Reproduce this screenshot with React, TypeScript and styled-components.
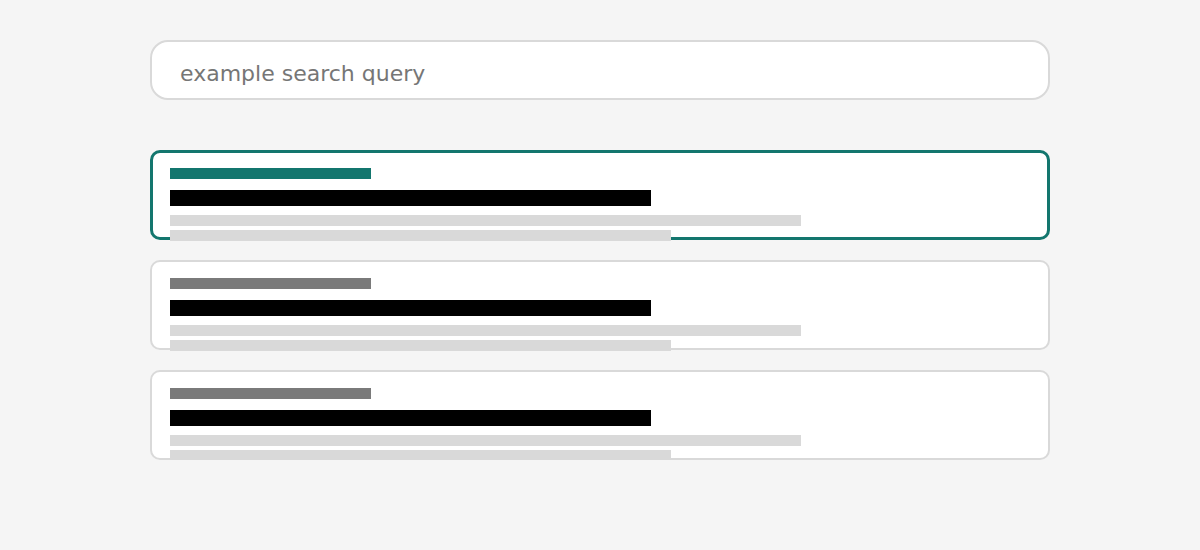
import React from 'react'
import styled, { createGlobalStyle } from 'styled-components'

const colors = {
  background: '#f5f5f5',
  border: '#d9d9d9',
  accent: '#13766e',
  muted: '#7a7a7a',
  line: '#d9d9d9',
}

const GlobalStyle = createGlobalStyle`
  html, body {
    margin: 0;
    padding: 0;
    background-color: ${colors.background};
    font-family: "DejaVu Sans", "Liberation Sans", sans-serif;
  }
`

const Page = styled.div`
  display: flex;
  flex-direction: column;
  width: 900px;
  margin: 0 auto;
  padding-top: 40px;
`

const SearchInput = styled.input`
  box-sizing: border-box;
  width: 100%;
  height: 60px;
  padding: 6px 28px 0;
  border: 2px solid ${colors.border};
  border-radius: 18px;
  background-color: #fff;
  font-family: "DejaVu Sans", sans-serif;
  font-size: 22px;
  color: #333;
  outline: none;

  &::placeholder {
    color: #767676;
  }
`

const Results = styled.div`
  display: flex;
  flex-direction: column;
  gap: 20px;
  margin-top: 50px;
`

interface CardProps {
  $active?: boolean
}

const Card = styled.div<CardProps>`
  box-sizing: border-box;
  display: flex;
  flex-direction: column;
  align-items: flex-start;
  height: 90px;
  background-color: #fff;
  border-radius: 10px;
  border: ${({ $active }) =>
    $active ? `3px solid ${colors.accent}` : `2px solid ${colors.border}`};
  padding: ${({ $active }) => ($active ? '15px 17px 0' : '16px 18px 0')};
`

const Category = styled.div<CardProps>`
  flex-shrink: 0;
  width: 201px;
  height: 11px;
  background-color: ${({ $active }) => ($active ? colors.accent : colors.muted)};
`

const Title = styled.div`
  flex-shrink: 0;
  width: 481px;
  height: 16px;
  margin-top: 11px;
  background-color: #000;
`

const Snippet = styled.div<{ $width: number; $gap: number }>`
  flex-shrink: 0;
  width: ${({ $width }) => $width}px;
  height: 11px;
  margin-top: ${({ $gap }) => $gap}px;
  background-color: ${colors.line};
`

const results = [{ active: true }, { active: false }, { active: false }]

function App() {
  return (
    <>
      <GlobalStyle />
      <Page>
        <SearchInput placeholder="example search query" />
        <Results>
          {results.map((r, i) => (
            <Card key={i} $active={r.active}>
              <Category $active={r.active} />
              <Title />
              <Snippet $width={631} $gap={9} />
              <Snippet $width={501} $gap={4} />
            </Card>
          ))}
        </Results>
      </Page>
    </>
  )
}

export default App
